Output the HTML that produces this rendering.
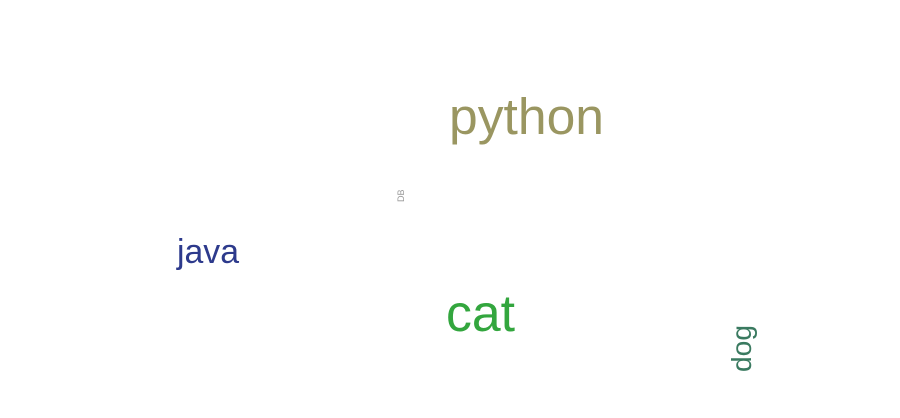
<!DOCTYPE html>
<html><head><style>html,body{margin:0;padding:0;background:#fff;width:900px;height:418px;overflow:hidden}</style></head>
<body>
<svg width="900" height="418" xmlns="http://www.w3.org/2000/svg" style="display:block;font-family:'Liberation Sans',sans-serif">
<text x="449" y="134" font-size="51" fill="#9a9661" textLength="155" lengthAdjust="spacingAndGlyphs">python</text>
<text x="446" y="331" font-size="52" fill="#33a63e" textLength="69" lengthAdjust="spacingAndGlyphs">cat</text>
<text x="177" y="263" font-size="34" fill="#2d3a8c" textLength="62" lengthAdjust="spacingAndGlyphs">java</text>
<text transform="translate(751,372) rotate(-90)" x="0" y="0" font-size="28" fill="#3a7a60" textLength="47" lengthAdjust="spacingAndGlyphs">dog</text>
<text transform="translate(404,202) rotate(-90)" x="0" y="0" font-size="9" fill="#999">DB</text>
</svg>
</body></html>
